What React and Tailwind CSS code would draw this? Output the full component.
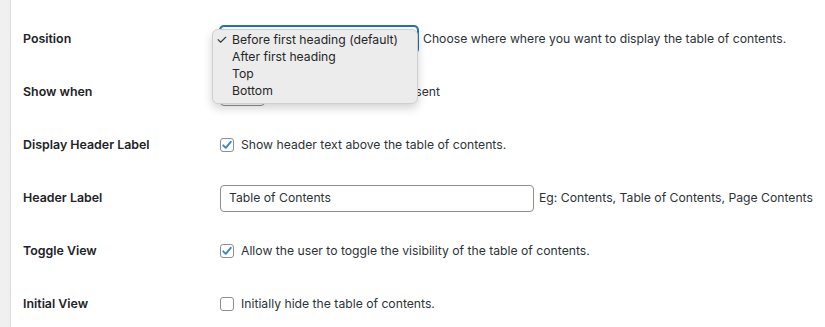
import React from 'react';

const font = { fontFamily: 'Inter, "Noto Sans", sans-serif' };

const Check = ({ on }) => (
  <span className="w-[14px] h-[14px] rounded-[3px] border border-[#8c8f94] bg-white flex items-center justify-center shrink-0">
    {on && (
      <svg width="12" height="12" viewBox="0 0 12 12">
        <path d="M2.2 6.3 L4.8 8.8 L9.8 2.8" fill="none" stroke="#3582c4" strokeWidth="1.8" strokeLinecap="round" strokeLinejoin="round" />
      </svg>
    )}
  </span>
);

const Row = ({ label, children }) => (
  <div className="flex items-center h-[53px]">
    <div className="w-[209px] pl-[12px] font-semibold text-[12.4px] text-[#1d2327]">{label}</div>
    <div className="flex items-center text-[12.2px] text-[#2c3338]">{children}</div>
  </div>
);

export default function App() {
  return (
    <div className="flex w-[825px] h-[327px] bg-white overflow-hidden" style={font}>
      <div className="w-[11px] bg-[#f0f0f1] border-r border-[#dcdcde]" />
      <div className="flex-1 pt-[13px]">
        <Row label="Position">
          <div className="relative z-10">
            <div className="w-[198px] h-[27px] rounded-[4px] border border-[#2271b1] shadow-[0_0_0_1px_#2271b1] bg-white" />
            <div className="absolute left-[-8px] top-[3px] w-[206px] h-[75px] rounded-[6px] bg-[#ececec] border border-[#cfcfcf] shadow-[0_4px_10px_rgba(0,0,0,0.18)] pt-[1px] text-[12.2px] leading-[17px] text-[#262626]">
              <div className="flex"><span className="w-[19px] pl-[3px] text-[13px]">✓</span>Before first heading (default)</div>
              <div className="pl-[19px]">After first heading</div>
              <div className="pl-[19px]">Top</div>
              <div className="pl-[19px]">Bottom</div>
            </div>
          </div>
          <span className="ml-[5px]">Choose where where you want to display the table of contents.</span>
        </Row>
        <Row label="Show when">
          <div className="w-[45px] h-[26px] rounded-[4px] border border-[#8c8f94] bg-white" />
          <span className="ml-[5px] w-[170px] text-right">or more headings are present</span>
        </Row>
        <Row label="Display Header Label">
          <Check on />
          <span className="ml-[7px]">Show header text above the table of contents.</span>
        </Row>
        <Row label="Header Label">
          <div className="w-[314px] h-[27px] rounded-[4px] border border-[#8c8f94] bg-white flex items-center px-[8px]">Table of Contents</div>
          <span className="ml-[5px]">Eg: Contents, Table of Contents, Page Contents</span>
        </Row>
        <Row label="Toggle View">
          <Check on />
          <span className="ml-[7px]">Allow the user to toggle the visibility of the table of contents.</span>
        </Row>
        <Row label="Initial View">
          <Check />
          <span className="ml-[7px]">Initially hide the table of contents.</span>
        </Row>
      </div>
    </div>
  );
}
